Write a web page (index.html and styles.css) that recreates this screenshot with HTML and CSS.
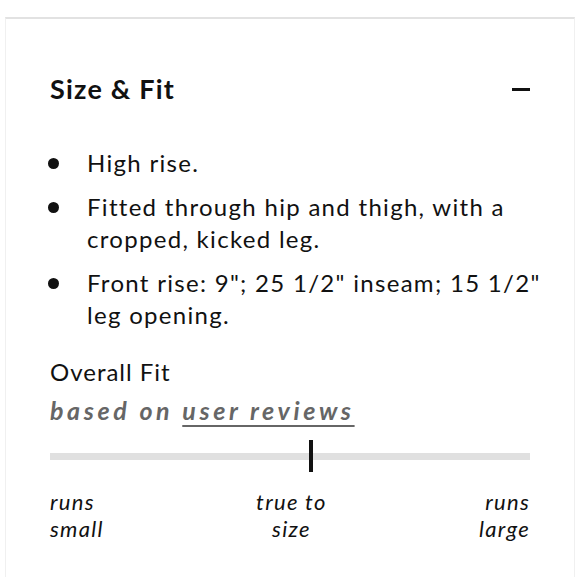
FILE: index.html
```html
<!DOCTYPE html>
<html>
<head>
<meta charset="utf-8">
<link rel="stylesheet" href="styles.css">
</head>
<body>
<div class="card">
  <div class="header">
    <h2 class="title">Size &amp; Fit</h2>
    <span class="toggle"></span>
  </div>
  <ul class="bullets">
    <li>High rise.</li>
    <li>Fitted through hip and thigh, with a cropped, kicked leg.</li>
    <li>Front rise: 9"; 25&nbsp;1/2" inseam; 15&nbsp;1/2" leg opening.</li>
  </ul>
  <div class="fit">
    <div class="fit-title">Overall Fit</div>
    <div class="fit-sub">based on <span class="link">user reviews</span></div>
    <div class="scale">
      <div class="track"></div>
      <div class="marker"></div>
    </div>
    <div class="labels">
      <span class="lbl left">runs<br>small</span>
      <span class="lbl mid">true to<br>size</span>
      <span class="lbl right">runs<br>large</span>
    </div>
  </div>
</div>
</body>
</html>
```
FILE: styles.css
```css
html, body {
  margin: 0;
  padding: 0;
  background: #fff;
}
body {
  font-family: Lato, "Open Sans", sans-serif;
  color: #111;
}
.card {
  margin: 17px 5px 0 5px;
  border-top: 2px solid #e2e2e2;
  border-left: 1px solid #f0f0f0;
  border-right: 1px solid #f0f0f0;
  padding: 54px 44px 40px 44px;
  height: 560px;
  box-sizing: border-box;
}
.header {
  display: flex;
  align-items: center;
  justify-content: space-between;
}
.title {
  margin: 0;
  font-size: 27px;
  font-weight: 700;
  letter-spacing: 1.2px;
  line-height: 32px;
  color: #111;
}
.toggle {
  width: 18px;
  height: 3px;
  background: #111;
  margin-right: 0;
}
.bullets {
  list-style: none;
  margin: 42px -24px 0 0;
  padding: 0;
}
.bullets li {
  position: relative;
  padding-left: 37px;
  font-size: 24px;
  letter-spacing: 1.3px;
  line-height: 32px;
  margin-bottom: 12px;
  color: #111;
}
.bullets li::before {
  content: "";
  position: absolute;
  left: -2px;
  top: 11px;
  width: 11px;
  height: 11px;
  border-radius: 50%;
  background: #111;
}
.fit {
  margin-top: 24px;
}
.fit-title {
  font-size: 24px;
  letter-spacing: 1px;
  line-height: 34px;
}
.fit-sub {
  margin-top: 2px;
  font-size: 25px;
  line-height: 38px;
  font-weight: 700;
  font-style: italic;
  color: #666;
  letter-spacing: 3.6px;
}
.link {
  text-decoration: underline;
  text-underline-offset: 5px;
  text-decoration-thickness: 2px;
}
.scale {
  position: relative;
  height: 32px;
  margin-top: 11px;
}
.track {
  position: absolute;
  left: 0;
  right: 0;
  top: 13px;
  height: 7px;
  background: #e0e0e0;
}
.marker {
  position: absolute;
  left: 259px;
  top: 0;
  width: 4px;
  height: 32px;
  background: #111;
}
.labels {
  display: flex;
  justify-content: space-between;
  margin-top: 17px;
}
.lbl {
  font-size: 22px;
  line-height: 26.5px;
  letter-spacing: 1.3px;
  font-style: italic;
  color: #111;
}
.lbl.mid {
  text-align: center;
}
.lbl.right {
  text-align: right;
}
```
